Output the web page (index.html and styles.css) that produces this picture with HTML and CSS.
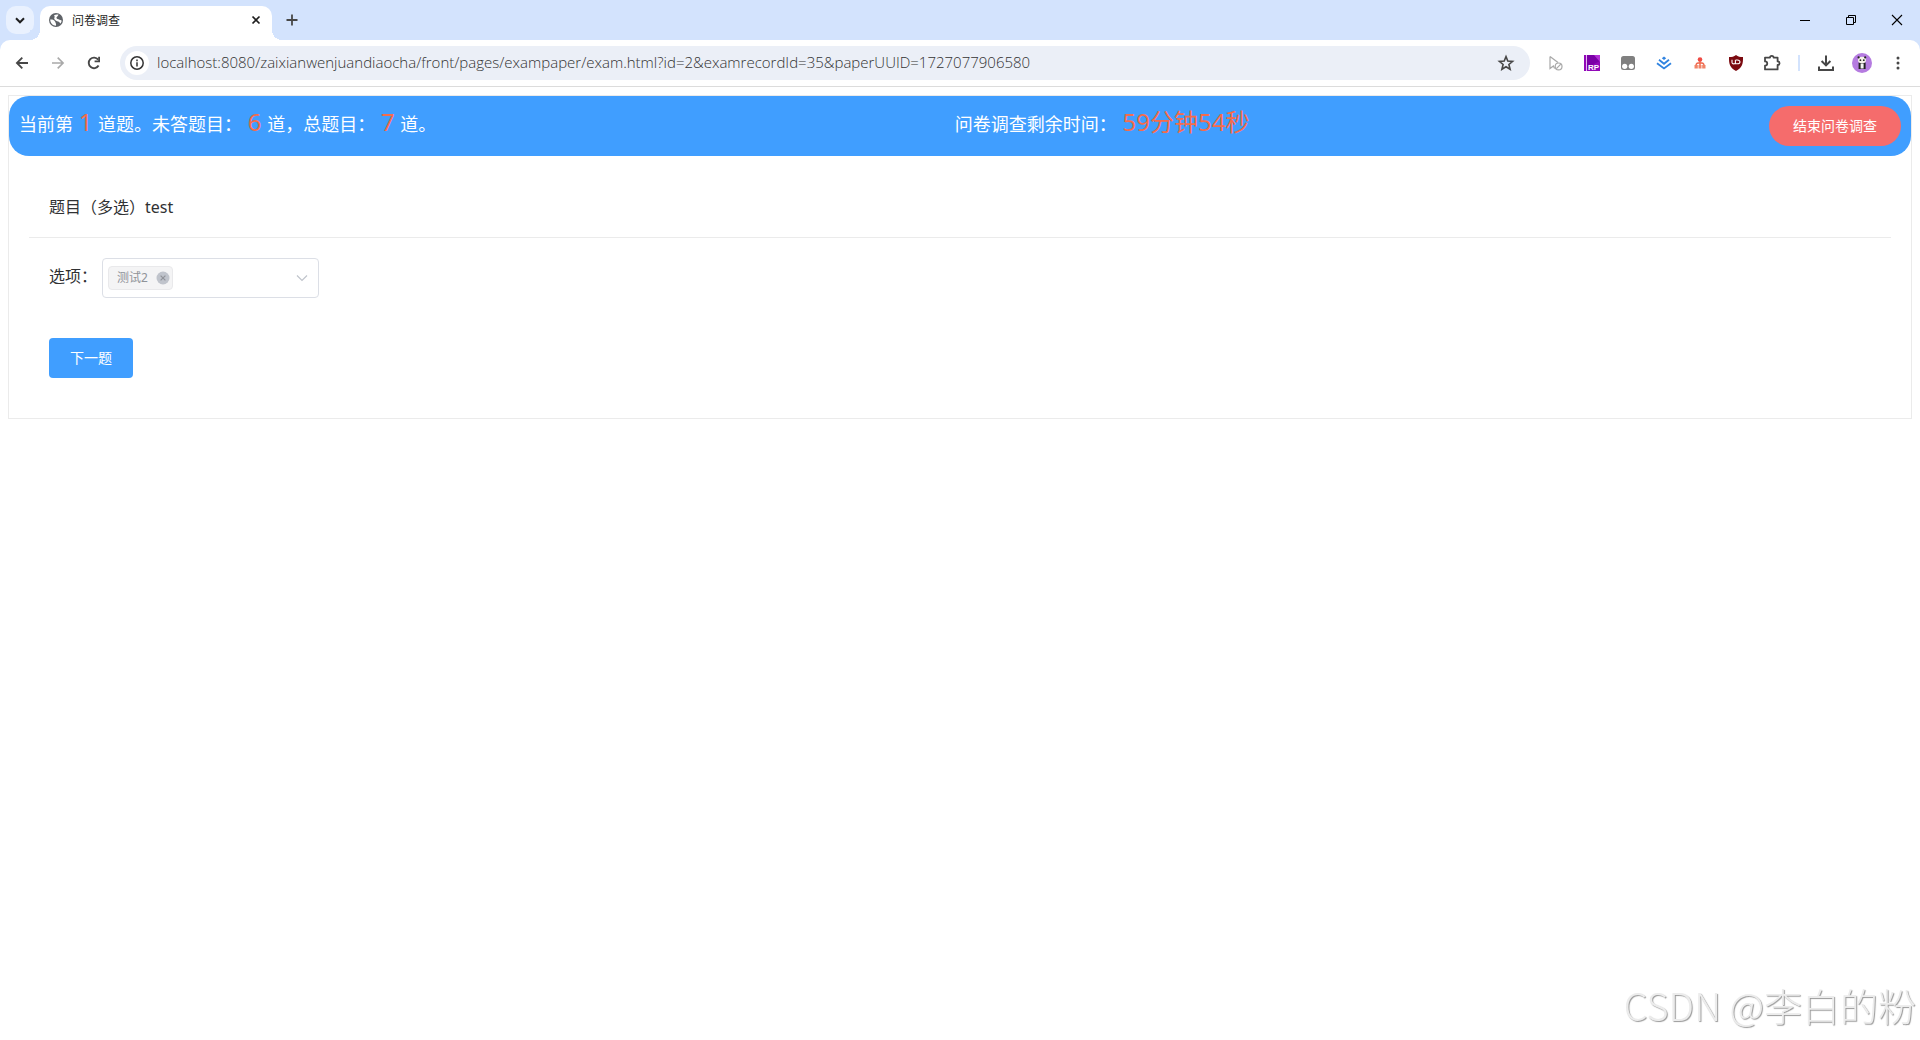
FILE: index.html
```html
<!DOCTYPE html>
<html lang="zh-CN">
<head>
    <meta charset="utf-8">
    <title>问卷调查</title>
    <link rel="stylesheet" href="styles.css">
</head>
<body>
    <!-- Tab strip -->
    <div class="tab-strip">
        <button class="tab-search" aria-label="搜索标签页">
            <svg width="28" height="28"><path d="M10 12.3 L14 16.3 L18 12.3" fill="none" stroke="#1f1f1f" stroke-width="2"/></svg>
        </button>
        <div class="tab">
            <svg width="16" height="16" viewBox="0 0 16 16">
                <circle cx="8" cy="8" r="7" fill="#5f6368"/>
                <path d="M2.2 7.6 C4.4 7.4 6 8 7 9.4 C7.4 10.6 8.4 11.2 8 13.8 C4.8 13.6 2.3 11.4 2.2 7.6Z" fill="#fff"/>
                <path d="M6 3.2 C7.6 2.4 9.6 2.2 10.6 2.8 C9.6 3.6 9.8 4.6 8.8 5 C8 5.4 8.6 6.6 9.4 7 C11 7.2 12 8.2 13.6 8.4 C13.6 9.6 13 11 12.4 11.6 C11.6 10.6 11.4 9.6 10 9.4 C8 9 6.4 7.6 6.2 6.4 C6.4 5.2 7.2 4.6 6 3.2Z" fill="#fff"/>
            </svg>
            <span class="tab-title">问卷调查</span>
            <button class="tab-close" aria-label="关闭标签页">
                <svg width="16" height="16"><path d="M4.5 4.5 L11.5 11.5 M11.5 4.5 L4.5 11.5" stroke="#1f1f1f" stroke-width="1.7"/></svg>
            </button>
        </div>
        <button class="new-tab" aria-label="新标签页">
            <svg width="28" height="28"><path d="M14 8.5 V19.5 M8.5 14 H19.5" stroke="#474747" stroke-width="1.8"/></svg>
        </button>
        <div class="window-buttons">
            <button aria-label="最小化"><svg width="46" height="40"><path d="M18 20.5 H28" stroke="#000"/></svg></button>
            <button aria-label="还原">
                <svg width="46" height="40"><path d="M18.5 17.5 H25.5 V24.5 H18.5Z M20.5 17.5 V15.5 H27.5 V22.5 H25.5" fill="none" stroke="#000"/></svg>
            </button>
            <button aria-label="关闭"><svg width="46" height="40"><path d="M18 15 L28 25 M28 15 L18 25" stroke="#000" stroke-width="1.1"/></svg></button>
        </div>
    </div>

    <!-- Toolbar -->
    <div class="toolbar-back">
        <div class="toolbar">
            <button class="tool" aria-label="后退">
                <svg width="20" height="20"><path d="M16 10 H5 M10.3 4.6 L4.9 10 L10.3 15.4" fill="none" stroke="#474747" stroke-width="1.8"/></svg>
            </button>
            <button class="tool" aria-label="前进">
                <svg width="20" height="20"><path d="M4 10 H15 M9.7 4.6 L15.1 10 L9.7 15.4" fill="none" stroke="#a9a9a9" stroke-width="1.6"/></svg>
            </button>
            <button class="tool" aria-label="重新加载">
                <svg width="20" height="20"><path d="M14.6 12.6 A5.3 5.3 0 1 1 14.2 6.6" fill="none" stroke="#474747" stroke-width="1.9"/><path d="M16 3.8 V9.2 H10.6 V7.4 H14.2 V3.8Z" fill="#474747"/></svg>
            </button>
            <div class="omnibox">
                <button class="site-info" aria-label="网站信息">
                    <svg width="16" height="16"><circle cx="8" cy="8" r="6.2" fill="none" stroke="#333" stroke-width="1.5"/><path d="M8 7.2 V11.4 M8 4.6 V6.2" stroke="#333" stroke-width="1.5"/></svg>
                </button>
                <input class="url" type="text" aria-label="地址" value="localhost:8080/zaixianwenjuandiaocha/front/pages/exampaper/exam.html?id=2&amp;examrecordId=35&amp;paperUUID=1727077906580">
                <button class="bookmark" aria-label="收藏">
                    <svg width="20" height="20"><path d="M10 3.6 L11.8 8 L16.6 8.4 L12.9 11.5 L14.1 16.2 L10 13.7 L5.9 16.2 L7.1 11.5 L3.4 8.4 L8.2 8Z" fill="none" stroke="#474747" stroke-width="1.6"/></svg>
                </button>
            </div>
            <button class="tool" aria-label="选择工具">
                <svg width="20" height="20"><path d="M4 3.5 V15.5 L7.4 13 L8.6 15.4 M4 3.5 L12 9.6" fill="none" stroke="#a8a8a8" stroke-width="1.2"/><circle cx="12.6" cy="13.4" r="3.4" fill="none" stroke="#a8a8a8" stroke-width="1.2"/><path d="M10.4 15.6 L14.8 11.2" stroke="#a8a8a8" stroke-width="1.2"/></svg>
            </button>
            <button class="tool" aria-label="Axure RP">
                <svg width="20" height="20"><rect x="2" y="2" width="16" height="16" fill="#9109b8"/><path d="M5 2 H18 V8 L12 11 L5 17Z" fill="#7a00a6"/><path d="M12 2 H18 V9Z" fill="#b32fd6"/><path d="M4.5 2 V18" stroke="#e6b6f2"/><text x="6" y="17" class="rp-text">RP</text></svg>
            </button>
            <button class="tool" aria-label="Tampermonkey">
                <svg width="20" height="20"><rect x="3" y="3" width="14" height="14" rx="2.5" fill="#808080"/><circle cx="6.7" cy="13.3" r="2.6" fill="#fff"/><circle cx="13.3" cy="13.3" r="2.6" fill="#fff"/></svg>
            </button>
            <button class="tool" aria-label="掘金">
                <svg width="20" height="20"><path d="M10 3.6 L12.2 5.3 L10 7 L7.8 5.3Z" fill="#2f83e0"/><path d="M5 6.8 L10 10.8 L15 6.8 M3 10.2 L10 15.4 L17 10.2" fill="none" stroke="#2f83e0" stroke-width="1.8"/></svg>
            </button>
            <button class="tool" aria-label="站点地图">
                <svg width="20" height="20"><circle cx="10" cy="6.6" r="2.3" fill="#ef4a44"/><path d="M10 8 V15 M6 12.4 C6 9.8 8 9.8 10 9.8 C12 9.8 14 9.8 14 12.4" fill="none" stroke="#f0694f" stroke-width="1.5"/><path d="M4.5 12 H7.8 V15.5 H4.5Z M8.5 12 H11.5 V15.5 H8.5Z M12.2 12 H15.5 V15.5 H12.2Z" fill="#f08468"/></svg>
            </button>
            <button class="tool" aria-label="uBlock Origin">
                <svg width="20" height="20"><path d="M10 2 C12 3.8 14 4 17 4 C17.2 11 16 15 10 18 C4 15 2.8 11 3 4 C6 4 8 3.8 10 2Z" fill="#7b0a10"/><path d="M6 6.8 V9.4 C6 11.4 9.4 11.4 9.4 9.4 V6.8 V10.8 H11.4 C14.8 10.8 14.8 7 11.4 7 H10" fill="none" stroke="#fff" stroke-width="1.1"/></svg>
            </button>
            <button class="tool" aria-label="扩展程序">
                <svg width="20" height="20"><path d="M3 4.6 H8 C8 2.2 11.6 2.2 11.6 4.6 H15.6 V8.4 C18.2 8.4 18.2 12 15.6 12 V16.4 H3 V12.6 C6 12.6 6 8.4 3 8.4Z" fill="none" stroke="#474747" stroke-width="1.8" stroke-linejoin="round"/></svg>
            </button>
            <span class="separator"></span>
            <button class="tool" aria-label="下载">
                <svg width="20" height="20"><path d="M10 2.5 V12 M5.6 8 L10 12.4 L14.4 8 M3 13.5 V17 H17 V13.5" fill="none" stroke="#474747" stroke-width="2"/></svg>
            </button>
            <button class="tool" aria-label="用户">
                <svg width="20" height="20"><circle cx="10" cy="10" r="10" fill="#b57be0"/><path d="M6.6 9.5 H13.6 V16 H6.6Z" fill="#242424"/><rect x="8.6" y="10.5" width="3" height="5" fill="#f3f3f3"/><ellipse cx="10" cy="7" rx="4" ry="3.2" fill="#f5f2e8"/><circle cx="6.6" cy="4.4" r="1.1" fill="#222"/><circle cx="13.2" cy="4.4" r="1.1" fill="#222"/><circle cx="8.4" cy="7.2" r=".9" fill="#222"/><circle cx="11.8" cy="7.2" r=".9" fill="#222"/></svg>
            </button>
            <button class="tool" aria-label="菜单">
                <svg width="20" height="20" fill="#474747"><circle cx="10" cy="5" r="1.5"/><circle cx="10" cy="10" r="1.5"/><circle cx="10" cy="15" r="1.5"/></svg>
            </button>
        </div>
    </div>

    <!-- Exam page -->
    <main class="exam">
        <header class="exam-header">
            <div class="status">当前第 <span class="num">1</span> 道题。未答题目： <span class="num">6</span> 道，总题目： <span class="num">7</span> 道。</div>
            <div class="status">问卷调查剩余时间： <span class="num">59分钟54秒</span></div>
            <button class="btn btn-danger">结束问卷调查</button>
        </header>
        <section class="question">
            <div class="question-title">题目<span class="paren" lang="zh-TW">（</span>多选<span class="paren" lang="zh-TW">）</span>test</div>
            <div class="options">
                <label for="answer">选项：</label>
                <div class="select-box">
                    <select id="answer">
                        <option></option>
                    </select>
                    <span class="tag">测试2
                        <button class="tag-close" aria-label="移除">
                            <svg width="14" height="14"><circle cx="7" cy="7" r="6.5" fill="#c0c4cc"/><path d="M4.6 4.6 L9.4 9.4 M9.4 4.6 L4.6 9.4" stroke="#909399" stroke-width="1.2"/></svg>
                        </button>
                    </span>
                    <svg class="arrow" width="14" height="14"><path d="M2 4.5 L7 9.5 L12 4.5" fill="none" stroke="#c0c4cc" stroke-width="1.2"/></svg>
                </div>
            </div>
            <button class="btn btn-primary">下一题</button>
        </section>
    </main>

    <div class="watermark">CSDN @李白的粉</div>
</body>
</html>
```
FILE: styles.css
```css
* {
    box-sizing: border-box;
}
body {
    margin: 0;
    min-height: 100vh;
    background: #fff;
    color: #303133;
    font-family: "Noto Sans", "Noto Sans CJK SC", sans-serif;
    font-size: 16px;
}
button {
    padding: 0;
    border: 0;
    background: none;
    font-family: inherit;
}
svg {
    display: block;
}

/* Tab strip */
.tab-strip {
    display: flex;
    align-items: center;
    height: 40px;
    padding-left: 6px;
    background: #d3e3fd;
}
.tab-search {
    border-radius: 10px;
    background: #e9f1fe;
}
.tab {
    position: relative;
    display: flex;
    align-items: center;
    align-self: flex-end;
    gap: 8px;
    width: 232px;
    height: 34px;
    margin-left: 6px;
    padding: 0 8px 6px;
    border-radius: 10px 10px 0 0;
    background: #fff;
}
/* Curved feet of the active tab */
.tab::before,
.tab::after {
    content: "";
    position: absolute;
    bottom: 0;
    width: 10px;
    height: 10px;
}
.tab::before {
    left: -10px;
    background: radial-gradient(circle at 0 0, #d3e3fd 10px, #fff 10px);
}
.tab::after {
    right: -10px;
    background: radial-gradient(circle at 100% 0, #d3e3fd 10px, #fff 10px);
}
.tab-title {
    flex: 1;
    color: #1f1f1f;
    font-size: 12px;
}
.new-tab {
    margin-left: 6px;
}
.window-buttons {
    display: flex;
    margin-left: auto;
}

/* Toolbar */
.toolbar-back {
    background: #d3e3fd;
}
.toolbar {
    display: flex;
    align-items: center;
    height: 47px;
    padding: 0 4px;
    border-bottom: 1px solid #dcdcdc;
    border-radius: 10px 10px 0 0;
    background: #fff;
}
.tool {
    display: flex;
    justify-content: center;
    width: 36px;
}
.omnibox {
    display: flex;
    flex: 1;
    align-items: center;
    height: 34px;
    margin: 0 8px;
    padding: 0 14px 0 5px;
    border-radius: 17px;
    background: #ebeff7;
}
.site-info {
    padding: 4px;
    border-radius: 50%;
    background: #fff;
}
.url {
    flex: 1;
    height: 24px;
    padding: 0 8px 2px;
    border: 0;
    outline: 0;
    background: none;
    color: #333;
    font-family: "Open Sans", "Noto Sans", sans-serif;
    font-size: 15px;
    font-weight: 300;
}
.separator {
    width: 2px;
    height: 16px;
    margin: 0 8px;
    background: #d3e3fd;
}
.rp-text {
    fill: #fff;
    font: bold 8px "Liberation Sans", sans-serif;
}

/* Exam page */
.exam {
    margin: 8px;
    border: 1px solid #ebebeb;
}
.exam-header {
    display: flex;
    justify-content: space-between;
    padding: 10px;
    border-radius: 20px;
    background: #409eff;
}
.status {
    color: #fff;
    font-size: 18px;
    line-height: 32px;
    white-space: nowrap;
}
.num {
    margin: 0 1px;
    color: #f56c4c;
    font-size: 24px;
}
.btn {
    height: 40px;
    color: #fff;
    font-size: 14px;
}
.btn-danger {
    padding: 0 24px 2px;
    border-radius: 20px;
    background: #f56c6c;
}
.btn-primary {
    margin: 40px 20px;
    padding: 0 21px 2px;
    border-radius: 4px;
    background: #409eff;
}
.question {
    padding: 20px 20px 0;
}
.question-title {
    padding: 20px;
    border-bottom: 1px solid #ebebeb;
    line-height: 20px;
}
.paren {
    font-family: "Noto Sans CJK TC", sans-serif;
}
.options {
    display: flex;
    gap: 5px;
    padding: 20px 20px 0;
    line-height: 36px;
}
.select-box {
    position: relative;
    width: 217px;
}
.select-box select {
    display: block;
    width: 100%;
    height: 40px;
    border: 1px solid #dcdfe6;
    border-radius: 4px;
    appearance: none;
    background: #fff;
}
.tag {
    position: absolute;
    top: 8px;
    left: 6px;
    display: flex;
    align-items: center;
    gap: 8px;
    height: 24px;
    padding: 0 2px 0 8px;
    border: 1px solid #e9e9eb;
    border-radius: 4px;
    background: #f4f4f5;
    color: #909399;
    font-size: 12px;
}
.arrow {
    position: absolute;
    top: 13px;
    right: 10px;
}

.watermark {
    position: fixed;
    right: 4px;
    bottom: 8px;
    color: #ececec;
    font-family: "Noto Sans CJK SC", sans-serif;
    font-size: 38px;
    font-weight: 300;
    text-shadow: 1px 1px 1px #999;
}
```
